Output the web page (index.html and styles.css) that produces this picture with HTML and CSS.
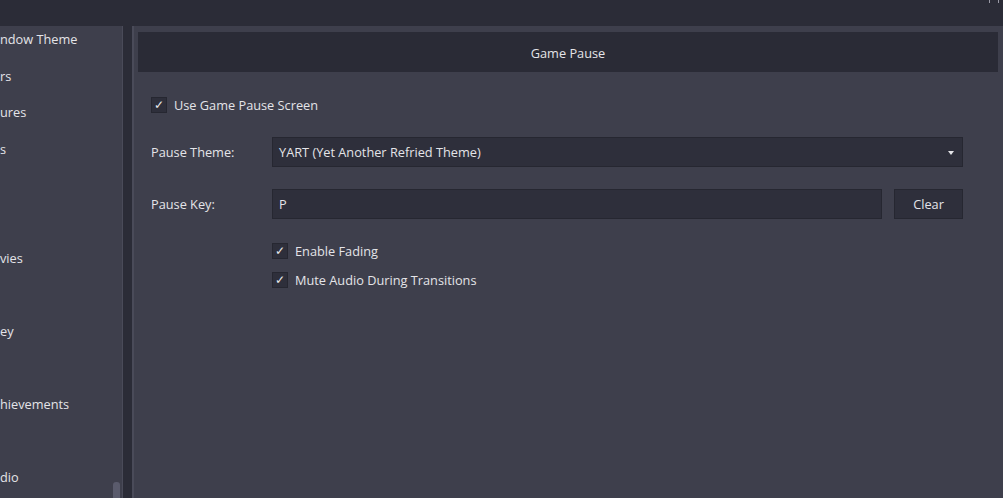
FILE: index.html
```html
<!DOCTYPE html>
<html lang="en">
<head>
  <meta charset="UTF-8" />
  <title>Game Pause</title>
  <link rel="stylesheet" href="styles.css">
</head>
<body>
  <div class="topbar"><span class="corner"></span></div>
  <div class="main">
    <div class="sidebar">
      <div class="item">ndow Theme</div>
      <div class="item">rs</div>
      <div class="item">ures</div>
      <div class="item">s</div>
      <div class="item"></div>
      <div class="item"></div>
      <div class="item">vies</div>
      <div class="item"></div>
      <div class="item">ey</div>
      <div class="item"></div>
      <div class="item">hievements</div>
      <div class="item"></div>
      <div class="item">dio</div>
      <div class="thumb"></div>
    </div>
    <div class="panel">
      <div class="header">Game Pause</div>
      <div class="form">
        <label class="check top-check"><span class="box">&#10003;</span>Use Game Pause Screen</label>

        <div class="row">
          <span class="label">Pause Theme:</span>
          <div class="combo">YART (Yet Another Refried Theme)<span class="arrow"></span></div>
        </div>

        <div class="row">
          <span class="label">Pause Key:</span>
          <div class="keybox">P</div>
          <button class="clear">Clear</button>
        </div>

        <div class="subchecks">
          <label class="check"><span class="box">&#10003;</span>Enable Fading</label>
          <label class="check"><span class="box">&#10003;</span>Mute Audio During Transitions</label>
        </div>
      </div>
    </div>
  </div>
</body>
</html>
```

FILE: styles.css
```css
html, body {
  margin: 0;
  height: 100%;
  overflow: hidden;
}
body {
  background: #2b2c37;
  font-family: 'Open Sans', 'Noto Sans', sans-serif;
  font-size: 12.75px;
  color: #e4e4e8;
  display: flex;
  flex-direction: column;
}
.topbar {
  height: 26px;
  flex: none;
  position: relative;
}
.corner {
  position: absolute;
  right: 4px;
  top: 0;
  width: 8px;
  height: 3px;
  border-left: 1px solid #9a9aa6;
  border-right: 1px solid #9a9aa6;
}
.main {
  flex: 1;
  display: flex;
  gap: 9px;
}
.sidebar {
  width: 122px;
  background: #3e3f4c;
  border-right: 1px solid #4a4b59;
  padding-top: 4px;
  position: relative;
  overflow: hidden;
}
.item {
  height: 36.5px;
  line-height: 18px;
  white-space: nowrap;
}
.thumb {
  position: absolute;
  left: 113px;
  top: 456px;
  width: 7px;
  height: 30px;
  border-radius: 3px;
  background: #5a5b6c;
}
.panel {
  flex: 1;
  background: #3e3f4c;
  border-left: 2px solid #4a4b59;
  padding: 6px 5px 0 4px;
}
.header {
  background: #2a2b36;
  height: 40px;
  line-height: 43px;
  text-align: center;
}
.form {
  padding: 25px 35px 0 13px;
  display: flex;
  flex-direction: column;
}
.check {
  display: flex;
  align-items: center;
  gap: 7px;
  height: 16px;
}
.box {
  width: 14px;
  height: 14px;
  background: #2e2f3b;
  border: 1px solid #262731;
  color: #e8e8ec;
  font-size: 11.5px;
  line-height: 14px;
  text-align: center;
}
.top-check {
  margin-bottom: 24px;
}
.row {
  display: flex;
  align-items: center;
  gap: 12px;
  height: 30px;
  margin-bottom: 22px;
}
.label {
  width: 109px;
}
.combo, .keybox {
  flex: 1;
  height: 28px;
  line-height: 28px;
  background: #2e2f3b;
  border: 1px solid #262731;
  padding: 0 6px;
  position: relative;
}
.arrow {
  position: absolute;
  right: 8px;
  top: 13px;
  border-left: 3.5px solid transparent;
  border-right: 3.5px solid transparent;
  border-top: 4px solid #e4e4e8;
}
.clear {
  width: 69px;
  height: 30px;
  background: #2e2f3b;
  border: 1px solid #262731;
  color: #e4e4e8;
  font: inherit;
}
.subchecks {
  display: flex;
  flex-direction: column;
  gap: 13px;
  padding-left: 121px;
  margin-top: 2px;
}
```
